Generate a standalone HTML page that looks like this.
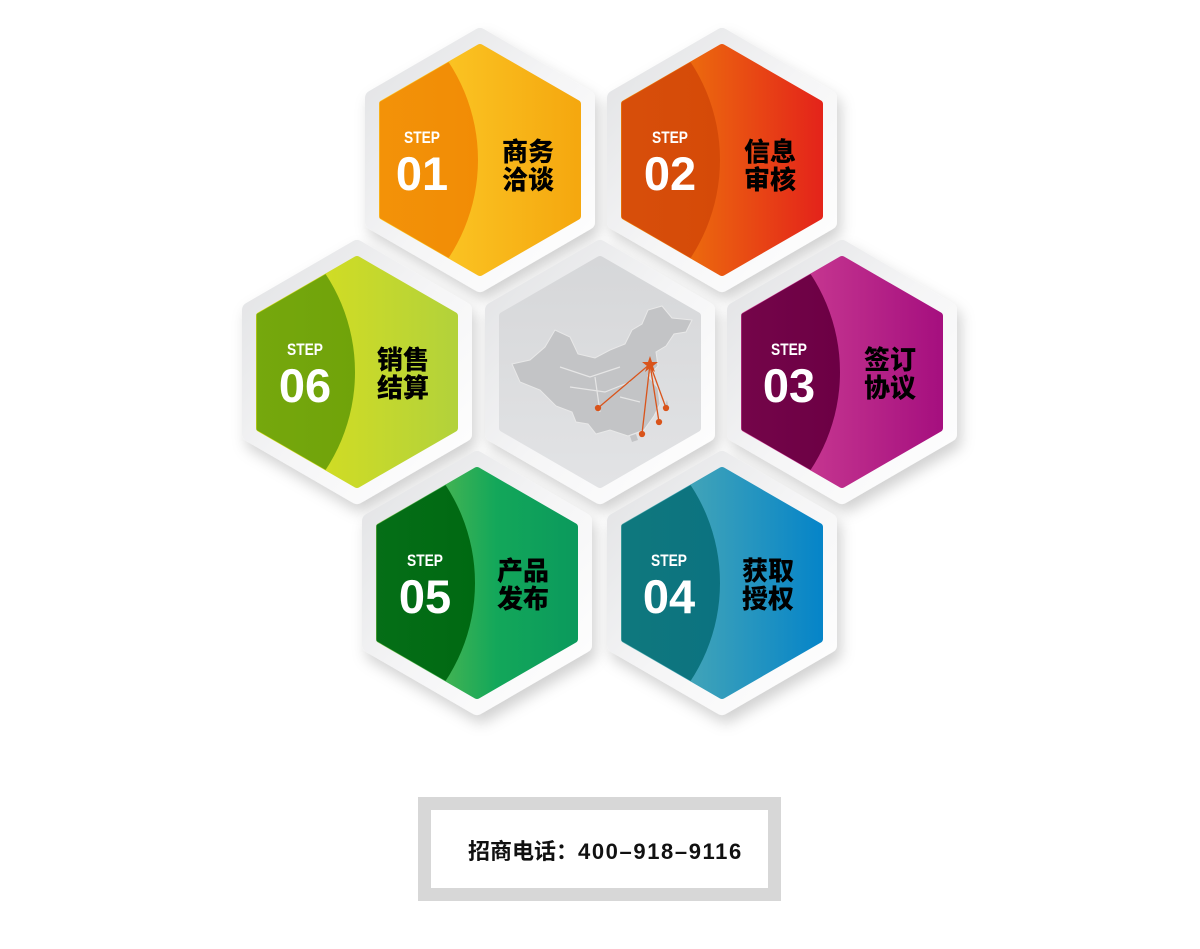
<!DOCTYPE html>
<html><head><meta charset="utf-8"><style>
html,body{margin:0;padding:0;background:#fff;width:1200px;height:949px;overflow:hidden}
svg{display:block}
.st{font-family:"Liberation Sans",sans-serif;font-weight:bold;font-size:17px;fill:#fff}
.dg{font-family:"Liberation Sans",sans-serif;font-weight:bold;font-size:47px;fill:#fff}
.cn{font-family:"Liberation Sans","Noto Sans CJK SC",sans-serif;font-weight:900;font-size:26px;fill:#000}
.box{position:absolute;left:418px;top:797px;width:337px;height:78px;border:13px solid #d7d7d7;background:#fff}
.box span{position:absolute;left:37px;top:24px;font-family:"Liberation Sans","Noto Sans CJK SC",sans-serif;font-weight:bold;font-size:22px;color:#111;white-space:nowrap}
.box b{letter-spacing:1.6px}
</style></head><body>
<svg width="1200" height="949" viewBox="0 0 1200 949">
<defs>
<filter id="sh" x="-30%" y="-30%" width="160%" height="160%"><feDropShadow dx="4" dy="8" stdDeviation="7" flood-color="#000" flood-opacity="0.18"/></filter>
<linearGradient id="fr" x1="0" y1="0" x2="1" y2="1"><stop offset="0" stop-color="#e1e2e4"/><stop offset="0.5" stop-color="#f5f5f6"/><stop offset="1" stop-color="#ffffff"/></linearGradient>
<clipPath id="hc"><polygon points="0,-116 100.5,-58 100.5,58 0,116 -100.5,58 -100.5,-58"/></clipPath>
<g id="frame"><polygon points="0,-124 107,-62 107,62 0,124 -107,62 -107,-62" fill="url(#fr)" stroke="url(#fr)" stroke-width="16" stroke-linejoin="round" filter="url(#sh)"/></g>
<linearGradient id="l1" x1="0" x2="1"><stop offset="0" stop-color="#fdd02c"/><stop offset="1" stop-color="#f5a80f"/></linearGradient>
<linearGradient id="d1" x1="0" x2="1"><stop offset="0" stop-color="#f5a212"/><stop offset="1" stop-color="#f28c05"/></linearGradient>
<linearGradient id="l2" x1="0" x2="1"><stop offset="0" stop-color="#f08c08"/><stop offset="1" stop-color="#e4251a"/></linearGradient>
<linearGradient id="d2" x1="0" x2="1"><stop offset="0" stop-color="#de5a10"/><stop offset="1" stop-color="#d54a08"/></linearGradient>
<linearGradient id="l3" x1="0" x2="1"><stop offset="0" stop-color="#d44898"/><stop offset="1" stop-color="#a6107f"/></linearGradient>
<linearGradient id="d3" x1="0" x2="1"><stop offset="0" stop-color="#8a1258"/><stop offset="1" stop-color="#6c0044"/></linearGradient>
<linearGradient id="l4" x1="0" x2="1"><stop offset="0" stop-color="#5eb3b0"/><stop offset="1" stop-color="#0785c8"/></linearGradient>
<linearGradient id="d4" x1="0" x2="1"><stop offset="0" stop-color="#158a78"/><stop offset="1" stop-color="#0c7280"/></linearGradient>
<linearGradient id="l5" x1="0" x2="1"><stop offset="0" stop-color="#7cc24a"/><stop offset="0.6" stop-color="#13a75a"/><stop offset="1" stop-color="#0b9a5c"/></linearGradient>
<linearGradient id="d5" x1="0" x2="1"><stop offset="0" stop-color="#127d24"/><stop offset="1" stop-color="#006912"/></linearGradient>
<linearGradient id="l6" x1="0" x2="1"><stop offset="0" stop-color="#dfe11a"/><stop offset="1" stop-color="#b3d23a"/></linearGradient>
<linearGradient id="d6" x1="0" x2="1"><stop offset="0" stop-color="#84b415"/><stop offset="1" stop-color="#70a30a"/></linearGradient>
<linearGradient id="gc" x1="0" y1="0" x2="0" y2="1"><stop offset="0" stop-color="#d6d7d9"/><stop offset="1" stop-color="#e2e3e5"/></linearGradient>
</defs>

<!-- 01 -->
<g transform="translate(480,160)"><use href="#frame"/>
<polygon points="0,-112 97,-56 97,56 0,112 -97,56 -97,-56" fill="url(#l1)" stroke="url(#l1)" stroke-width="8" stroke-linejoin="round"/>
<g clip-path="url(#hc)"><circle cx="-180" cy="0" r="178" fill="url(#d1)"/></g>
<text class="st" x="-76" y="-17" textLength="36" lengthAdjust="spacingAndGlyphs">STEP</text><text class="dg" x="-58" y="30" text-anchor="middle">01</text>
<text class="cn" x="22" y="1">商务</text><text class="cn" x="22" y="29">洽谈</text></g>
<!-- 02 -->
<g transform="translate(722,160)"><use href="#frame"/>
<polygon points="0,-112 97,-56 97,56 0,112 -97,56 -97,-56" fill="url(#l2)" stroke="url(#l2)" stroke-width="8" stroke-linejoin="round"/>
<g clip-path="url(#hc)"><circle cx="-180" cy="0" r="178" fill="url(#d2)"/></g>
<text class="st" x="-70" y="-17" textLength="36" lengthAdjust="spacingAndGlyphs">STEP</text><text class="dg" x="-52" y="30" text-anchor="middle">02</text>
<text class="cn" x="22" y="1">信息</text><text class="cn" x="22" y="29">审核</text></g>
<!-- 06 -->
<g transform="translate(357,372)"><use href="#frame"/>
<polygon points="0,-112 97,-56 97,56 0,112 -97,56 -97,-56" fill="url(#l6)" stroke="url(#l6)" stroke-width="8" stroke-linejoin="round"/>
<g clip-path="url(#hc)"><circle cx="-180" cy="0" r="178" fill="url(#d6)"/></g>
<text class="st" x="-70" y="-17" textLength="36" lengthAdjust="spacingAndGlyphs">STEP</text><text class="dg" x="-52" y="30" text-anchor="middle">06</text>
<text class="cn" x="20" y="-3">销售</text><text class="cn" x="20" y="25">结算</text></g>
<!-- center -->
<g transform="translate(600,372)"><use href="#frame"/>
<polygon points="0,-112 97,-56 97,56 0,112 -97,56 -97,-56" fill="url(#gc)" stroke="url(#gc)" stroke-width="8" stroke-linejoin="round"/>
<path d="M-88,-8 L-70,-12 L-55,-25 L-45,-42 L-30,-35 L-22,-18 L-5,-14 L10,-22 L25,-28 L32,-42 L42,-48 L48,-62 L62,-66 L72,-54 L92,-52 L86,-40 L74,-38 L66,-26 L56,-20 L58,-6 L48,4 L58,16 L60,32 L54,44 L44,58 L28,64 L10,58 L-4,62 L-12,52 L-24,50 L-28,40 L-44,34 L-60,18 L-80,10 Z" fill="#c3c4c6" stroke="#e8e8e8" stroke-width="1"/>
<path d="M-40,-5 L-10,5 L20,-5 M-30,15 L5,20 L30,10 M-5,5 L0,40 M20,25 L40,30" stroke="#e6e6e6" stroke-width="1.2" fill="none"/>
<path d="M30,64 l6,-2 l2,6 l-6,2z M64,36 l3,-8 l2,10z" fill="#c3c4c6"/>
<g stroke="#d9541b" stroke-width="1.3" fill="#d9541b"><line x1="50" y1="-8" x2="-2" y2="36"/><line x1="50" y1="-8" x2="42" y2="62"/><line x1="50" y1="-8" x2="59" y2="50"/><line x1="50" y1="-8" x2="66" y2="36"/>
<circle cx="-2" cy="36" r="2.5"/><circle cx="42" cy="62" r="2.5"/><circle cx="59" cy="50" r="2.5"/><circle cx="66" cy="36" r="2.5"/></g>
<polygon points="50,-16 52,-10 58,-10 53,-6 55,0 50,-4 45,0 47,-6 42,-10 48,-10" fill="#d9541b"/></g>
<!-- 03 -->
<g transform="translate(842,372)"><use href="#frame"/>
<polygon points="0,-112 97,-56 97,56 0,112 -97,56 -97,-56" fill="url(#l3)" stroke="url(#l3)" stroke-width="8" stroke-linejoin="round"/>
<g clip-path="url(#hc)"><circle cx="-180" cy="0" r="178" fill="url(#d3)"/></g>
<text class="st" x="-71" y="-17" textLength="36" lengthAdjust="spacingAndGlyphs">STEP</text><text class="dg" x="-53" y="30" text-anchor="middle">03</text>
<text class="cn" x="22" y="-3">签订</text><text class="cn" x="22" y="25">协议</text></g>
<!-- 05 -->
<g transform="translate(477,583)"><use href="#frame"/>
<polygon points="0,-112 97,-56 97,56 0,112 -97,56 -97,-56" fill="url(#l5)" stroke="url(#l5)" stroke-width="8" stroke-linejoin="round"/>
<g clip-path="url(#hc)"><circle cx="-180" cy="0" r="178" fill="url(#d5)"/></g>
<text class="st" x="-70" y="-17" textLength="36" lengthAdjust="spacingAndGlyphs">STEP</text><text class="dg" x="-52" y="30" text-anchor="middle">05</text>
<text class="cn" x="20" y="-3">产品</text><text class="cn" x="20" y="25">发布</text></g>
<!-- 04 -->
<g transform="translate(722,583)"><use href="#frame"/>
<polygon points="0,-112 97,-56 97,56 0,112 -97,56 -97,-56" fill="url(#l4)" stroke="url(#l4)" stroke-width="8" stroke-linejoin="round"/>
<g clip-path="url(#hc)"><circle cx="-180" cy="0" r="178" fill="url(#d4)"/></g>
<text class="st" x="-71" y="-17" textLength="36" lengthAdjust="spacingAndGlyphs">STEP</text><text class="dg" x="-53" y="30" text-anchor="middle">04</text>
<text class="cn" x="20" y="-3">获取</text><text class="cn" x="20" y="25">授权</text></g>
</svg>
<div class="box"><span>招商电话：<b>400–918–9116</b></span></div>
</body></html>
